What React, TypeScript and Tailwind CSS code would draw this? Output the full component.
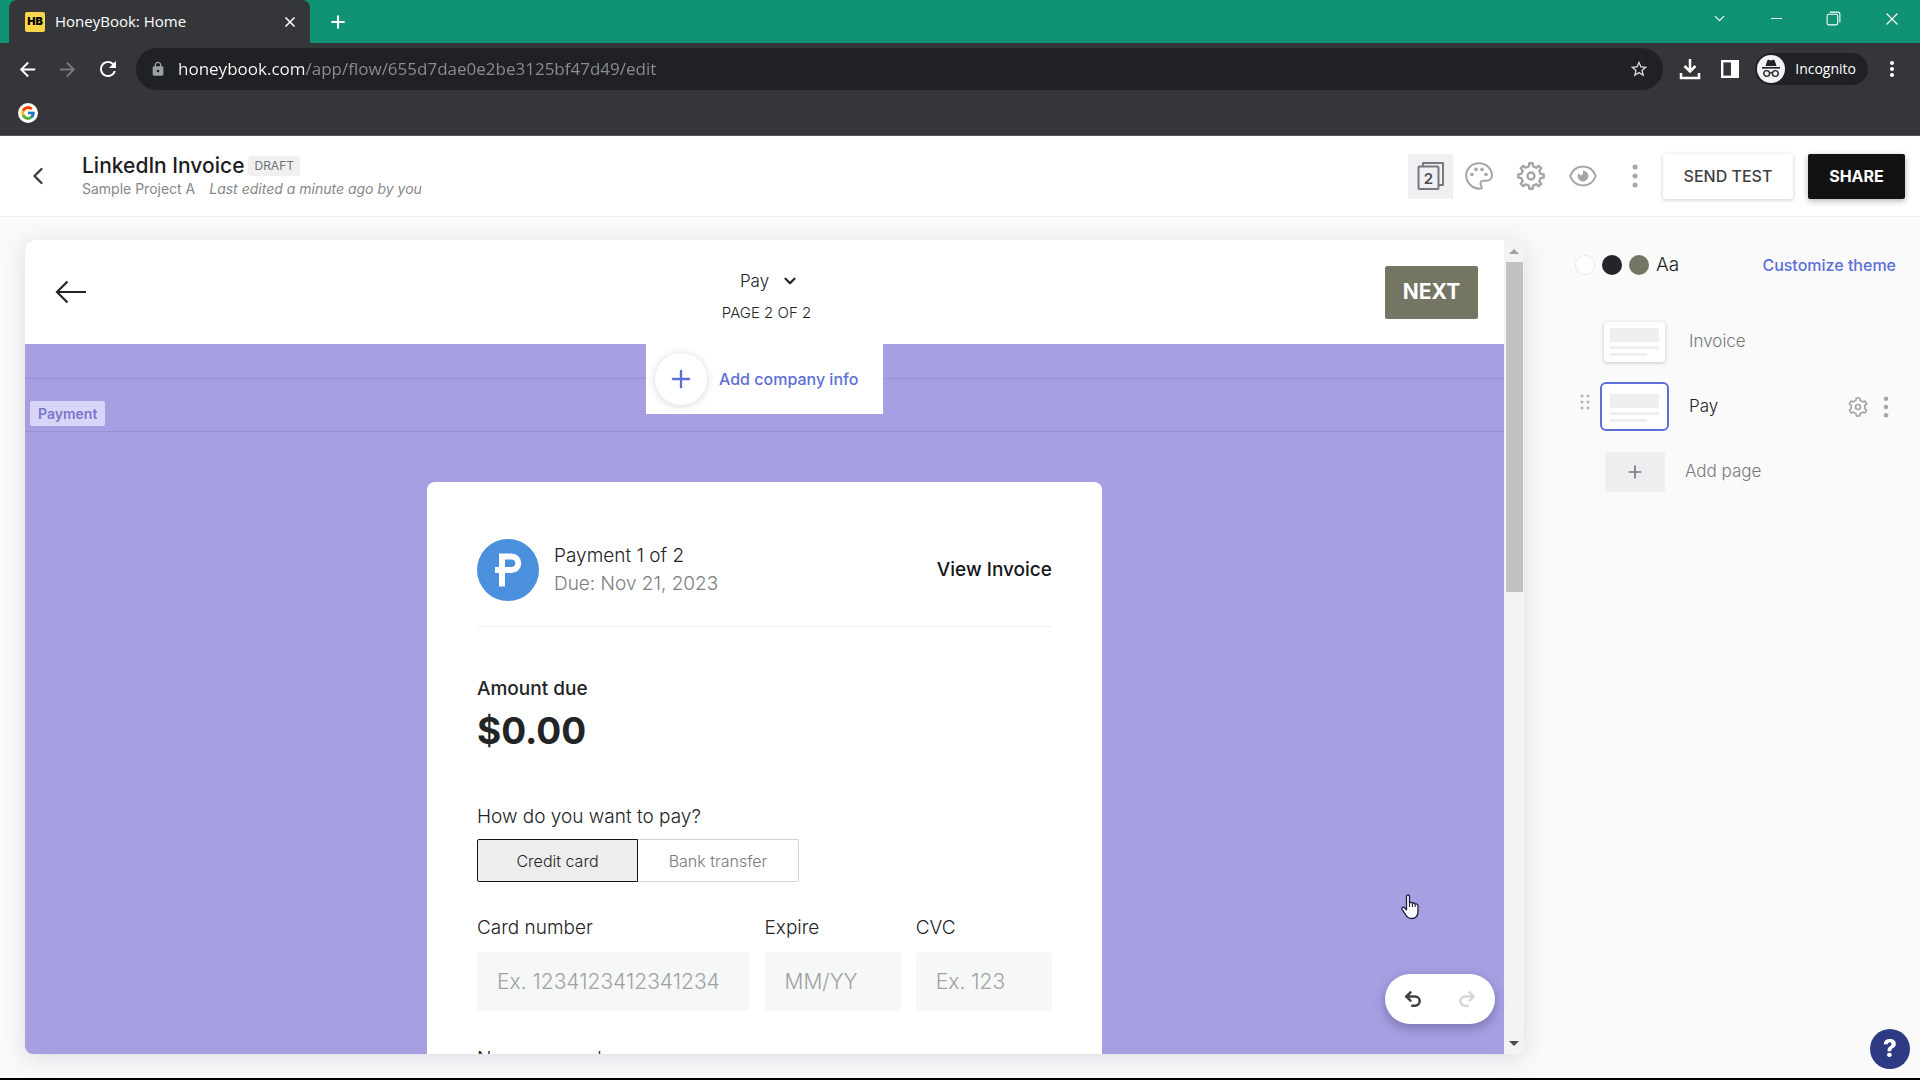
import { useState } from "react";
import { ChevronLeft, ChevronDown, Plus, X, Undo2, Redo2, Minus } from "lucide-react";
import { FcGoogle } from "react-icons/fc";
import {
  MdArrowBack,
  MdArrowForward,
  MdRefresh,
  MdLock,
  MdStarOutline,
  MdMoreVert,
} from "react-icons/md";

// Builds a closed gear outline centred on 12,12
function gearPath(teeth: number, outer: number, inner: number) {
  const step = (Math.PI * 2) / teeth;
  const points: string[] = [];
  for (let i = 0; i < teeth; i++) {
    const a = i * step - Math.PI / 2;
    const corners = [
      [a - step * 0.28, inner],
      [a - step * 0.17, outer],
      [a + step * 0.17, outer],
      [a + step * 0.28, inner],
    ];
    corners.forEach(([angle, r]) => {
      points.push(`${(12 + Math.cos(angle) * r).toFixed(2)} ${(12 + Math.sin(angle) * r).toFixed(2)}`);
    });
  }
  return `M${points.join("L")}Z`;
}

function Gear({ teeth, className }: { teeth: number; className: string }) {
  return (
    <svg viewBox="0 0 24 24" fill="none" stroke="currentColor" strokeWidth="2" strokeLinejoin="round" className={className}>
      <path d={gearPath(teeth, 11, 8.4)} />
      <circle cx="12" cy="12" r="3" />
    </svg>
  );
}

function Dots({ className }: { className: string }) {
  return (
    <svg viewBox="0 0 6 24" fill="currentColor" className={className}>
      <circle cx="3" cy="3" r="2.5" />
      <circle cx="3" cy="12" r="2.5" />
      <circle cx="3" cy="21" r="2.5" />
    </svg>
  );
}

function PagesIcon() {
  return (
    <svg viewBox="0 0 28 30" fill="none" stroke="#77797e" strokeWidth="2" strokeLinejoin="round" className="h-[30px] w-7">
      <path d="M6 5V2h20v22h-4" />
      <rect x="1.5" y="5.5" width="20" height="22.5" rx="1" />
      <text x="11.5" y="22.5" textAnchor="middle" fontSize="15" fontWeight="600" fontFamily="Inter, sans-serif" fill="#4b4d52" stroke="none">
        2
      </text>
    </svg>
  );
}

function PaletteIcon() {
  return (
    <svg viewBox="0 0 28 28" fill="none" stroke="currentColor" strokeWidth="2" strokeLinejoin="round" className="size-7">
      <path d="M14 1.3C7 1.3 1.2 6.3 1.2 13.2c0 7 5.6 13.2 13.4 13.5 2.2.1 2.6-1 1.6-2.700-1.500-2.400-.6-5.300 2-5.300h3.300c3.200 0 5.400-2.200 5.400-5.400C26.900 6.500 21 1.300 14 1.300Z" />
      <g fill="currentColor" stroke="none">
        <circle cx="7" cy="12.500" r="1.800" />
        <circle cx="11" cy="7.400" r="1.800" />
        <circle cx="17" cy="7.400" r="1.800" />
        <circle cx="21" cy="12.500" r="1.800" />
      </g>
    </svg>
  );
}

function EyeIcon() {
  return (
    <svg viewBox="0 0 28 22" fill="none" stroke="currentColor" strokeWidth="2" className="h-[22px] w-7">
      <path d="M1.200 11C3.500 5 8.500 1.500 14 1.500S24.500 5 26.800 11C24.500 17 19.500 20.500 14 20.500S3.500 17 1.200 11Z" />
      <path d="M14 5.600A5.400 5.400 0 1 1 9.200 8.600L12 10.500Q14.500 10 14 5.600Z" fill="currentColor" stroke="none" />
    </svg>
  );
}

function IncognitoIcon() {
  return (
    <svg viewBox="0 0 28 28" className="size-7">
      <circle cx="14" cy="14" r="14" fill="#f1f3f4" />
      <g fill="#202124">
        <path d="M10.300 5.500q.4-1 1.400-.7l2.300.6 2.300-.6q1-.3 1.400.7l1.800 5.500h-11Z" />
        <rect x="5" y="12" width="18" height="1.600" />
      </g>
      <g fill="none" stroke="#202124" strokeWidth="1.400">
        <circle cx="9.700" cy="18.500" r="2.900" />
        <circle cx="18.300" cy="18.500" r="2.900" />
        <path d="M12.600 18q1.400-.8 2.800 0" />
      </g>
    </svg>
  );
}

function HandCursor() {
  return (
    <svg viewBox="0 0 20 26" className="pointer-events-none absolute right-[104px] bottom-[134px] z-20 h-[26px] w-5">
      <path
        d="M6.500 2.500c0-2 3-2 3 0V9c.6-1.200 2.800-.9 2.900.5.8-1 2.700-.6 2.800.8.900-.8 2.800-.3 2.800 1.500v5.200c0 4.700-2.500 7.500-6.400 7.500-3.300 0-4.700-1.500-6.300-4.300L2 15.400c-.8-1.700 1-2.900 2.400-1.600l2.100 2Z"
        fill="#fff"
        stroke="#1f1b3a"
        strokeWidth="1.300"
        strokeLinejoin="round"
      />
      <path d="M9.500 9v4M12.400 9.700V13M15.200 10.500V13" stroke="#1f1b3a" strokeWidth="1.100" />
    </svg>
  );
}

function BrowserChrome() {
  return (
    <div className="bg-[#35363a] font-['Open_Sans',sans-serif] text-white">
      <div className="flex h-[43px] items-stretch bg-[#0f9374] pl-[9px]">
        <div className="flex w-[301px] items-center rounded-t-lg bg-[#35363a] pr-3 pl-4">
          <span className="flex h-5 w-5 items-center justify-center rounded-xs bg-[#fbd64b] font-['Inter',sans-serif] text-[11px] font-black text-black">
            HB
          </span>
          <span className="ml-2.5 flex-1 text-[15px]">HoneyBook: Home</span>
          <button aria-label="Close tab">
            <X className="size-4" strokeWidth={2.5} />
          </button>
        </div>
        <button aria-label="New tab" className="ml-[18px]">
          <Plus className="size-5" strokeWidth={2.5} />
        </button>
        <div className="ml-auto flex items-center gap-10 pr-[18px] pb-1.5">
          <button aria-label="Search tabs">
            <ChevronDown className="size-[17px]" strokeWidth={1.5} />
          </button>
          <button aria-label="Minimize">
            <Minus className="size-[17px]" strokeWidth={1.5} />
          </button>
          <button aria-label="Restore">
            <svg viewBox="0 0 16 16" fill="none" stroke="currentColor" className="size-[17px]">
              <rect x="2" y="4" width="10" height="10" rx="1.500" />
              <path d="M4.500 2H12a2 2 0 0 1 2 2v7.500" />
            </svg>
          </button>
          <button aria-label="Close">
            <X className="size-5" strokeWidth={1.5} />
          </button>
        </div>
      </div>

      <div className="flex h-[52px] items-center pr-4 pl-4">
        <button aria-label="Back">
          <MdArrowBack className="size-[23px]" />
        </button>
        <button aria-label="Forward" className="ml-[17px] text-[#77787c]">
          <MdArrowForward className="size-[23px]" />
        </button>
        <button aria-label="Reload" className="ml-[17px]">
          <MdRefresh className="size-6" />
        </button>
        <div className="ml-4 flex h-[42px] flex-1 items-center rounded-full bg-[#202124] px-3.5">
          <MdLock className="size-4 text-[#9aa0a6]" />
          <input
            aria-label="Address"
            defaultValue="honeybook.com/app/flow/655d7dae0e2be3125bf47d49/edit"
            className="ml-3 flex-1 bg-[linear-gradient(90deg,#ffffff_127px,#8b8f94_127px)] bg-clip-text text-[17px] text-transparent outline-none"
          />
          <button aria-label="Bookmark this page">
            <MdStarOutline className="size-5 text-[#d5d7da]" />
          </button>
        </div>
        <button aria-label="Downloads" className="ml-4">
          <svg viewBox="0 0 22 22" fill="none" stroke="currentColor" strokeWidth="2.500" className="size-[22px]">
            <path d="M11 1v12M5.500 8l5.500 5.500L16.500 8M2 15v5h18v-5" />
          </svg>
        </button>
        <button aria-label="Side panel" className="ml-5">
          <svg viewBox="0 0 18 18" className="size-[18px]">
            <rect x="1.200" y="1.200" width="15.600" height="15.600" fill="none" stroke="currentColor" strokeWidth="2.400" />
            <rect x="10" y="1" width="7" height="16" fill="currentColor" />
          </svg>
        </button>
        <button className="ml-4 flex h-8 items-center gap-2.5 rounded-full bg-[#202124] pr-3 pl-0.5 text-sm">
          <IncognitoIcon />
          Incognito
        </button>
        <button aria-label="Browser menu" className="ml-3">
          <MdMoreVert className="size-6" />
        </button>
      </div>

      <div className="flex h-[41px] items-start border-b border-[#55565a] pt-2 pl-[18px]">
        <a href="#google" aria-label="Google" className="rounded-full bg-white p-0.5">
          <FcGoogle className="size-4" />
        </a>
      </div>
    </div>
  );
}

function EditorHeader() {
  return (
    <header className="flex items-center border-b border-[#eeeeef] bg-white py-[17px] pr-[15px] pl-6">
      <button aria-label="Back to project" className="text-[#3a3a3c]">
        <ChevronLeft className="size-7" strokeWidth={2} />
      </button>
      <div className="ml-[30px]">
        <div className="flex items-center gap-1">
          <h1 className="text-[21px] leading-[26px] font-medium text-[#1c1c1e]">LinkedIn Invoice</h1>
          <span className="rounded bg-[#f0f0f1] px-1.5 text-xs leading-5 text-[#6f7175]">DRAFT</span>
        </div>
        <p className="text-sm leading-5 text-[#85878a]">
          Sample Project A <em className="ml-2.5">Last edited a minute ago by you</em>
        </p>
      </div>
      <div className="ml-auto flex items-center text-[#a3a5a9]">
        <button aria-label="Pages" className="flex h-[45px] w-[45px] items-center justify-center bg-[#eff0f1]">
          <PagesIcon />
        </button>
        <button aria-label="Theme" className="ml-3">
          <PaletteIcon />
        </button>
        <button aria-label="Settings" className="ml-6">
          <Gear teeth={8} className="size-7" />
        </button>
        <button aria-label="Preview" className="ml-6">
          <EyeIcon />
        </button>
        <button aria-label="More" className="mr-5 ml-[30px]">
          <Dots className="h-6 w-4" />
        </button>
        <button className="h-[45px] w-[130px] rounded-xs bg-white text-base font-medium text-[#3f4043] shadow-[0_1px_4px_rgba(0,0,0,0.2)]">
          SEND TEST
        </button>
        <button className="ml-[15px] h-[45px] w-[97px] rounded-xs bg-[#121214] text-base font-bold text-white shadow-[0_2px_6px_rgba(0,0,0,0.3)]">
          SHARE
        </button>
      </div>
    </header>
  );
}

const fields = [
  { id: "card-number", label: "Card number", placeholder: "Ex. 1234123412341234" },
  { id: "expire", label: "Expire", placeholder: "MM/YY" },
  { id: "cvc", label: "CVC", placeholder: "Ex. 123" },
];

function PaymentCard() {
  const [method, setMethod] = useState("Credit card");

  return (
    <section className="mx-auto mt-[50px] w-[675px] rounded-t-lg bg-white px-[50px] pt-[57px] text-[19px] leading-7 font-light text-[#222426]">
      <div className="flex items-center border-b border-[#efefef] pb-[25px]">
        <svg viewBox="0 0 62 62" className="size-[62px]">
          <circle cx="31" cy="31" r="31" fill="#4a90dc" />
          <path
            d="M25 47.500V17.500h9.500a6.800 6.800 0 0 1 0 13.600H18"
            fill="none"
            stroke="#fff"
            strokeWidth="6"
          />
        </svg>
        <div className="ml-[15px]">
          <p>Payment 1 of 2</p>
          <p className="text-[#7c7e80]">Due: Nov 21, 2023</p>
        </div>
        <a href="#invoice" className="ml-auto font-medium text-[#161618]">
          View Invoice
        </a>
      </div>

      <p className="mt-12 font-medium">Amount due</p>
      <p className="mt-0.5 text-[37px] leading-[52px] font-bold">$0.00</p>

      <fieldset className="mt-[46px]">
        <legend>How do you want to pay?</legend>
        <div className="mt-2 flex text-base">
          {["Credit card", "Bank transfer"].map((name) => (
            <label
              key={name}
              className="flex h-[43px] w-[161px] items-center justify-center border border-[#d3d4d5] text-[#77797c] first:rounded-l-xs last:rounded-r-xs last:border-l-0 has-checked:border-[#161618] has-checked:bg-[#ecedec] has-checked:text-[#222426]"
            >
              <input
                type="radio"
                name="method"
                checked={method === name}
                onChange={() => setMethod(name)}
                className="sr-only"
              />
              {name}
            </label>
          ))}
        </div>
      </fieldset>

      <div className="mt-8 grid grid-cols-[2fr_1fr_1fr] gap-x-[15px]">
        {fields.map((field) => (
          <div key={field.id} className="min-w-0">
            <label htmlFor={field.id} className="block">
              {field.label}
            </label>
            <input
              id={field.id}
              placeholder={field.placeholder}
              className="mt-2.5 h-[59px] w-full rounded-xs bg-[#f6f7f7] px-5 text-[21px] placeholder:text-[#9fa1a4]"
            />
          </div>
        ))}
      </div>

      <label htmlFor="card-name" className="mt-[34px] block">
        Name on card
      </label>
      <input id="card-name" className="mt-2.5 h-[59px] w-full bg-[#f6f7f7] px-5 text-[21px]" />
    </section>
  );
}

function Canvas() {
  return (
    <div className="relative flex min-h-0 flex-1 rounded-lg shadow-[0_4px_24px_rgba(40,40,80,0.14)]">
      <div className="flex min-w-0 flex-1 flex-col overflow-hidden rounded-l-lg bg-[#a6a0e2]">
        <div className="grid h-[104px] shrink-0 grid-cols-3 items-center bg-white pr-[26px] pl-[30px] text-[#222426]">
          <button aria-label="Previous page" className="justify-self-start">
            <svg viewBox="0 0 32 24" fill="none" stroke="currentColor" strokeWidth="2.200" className="h-6 w-8">
              <path d="M31 12H2.500M12.500 1.500 2 12l10.500 10.500" />
            </svg>
          </button>
          <div className="flex flex-col items-center pt-2.5 font-light">
            <div className="flex items-center gap-3 pl-1.5">
              <select aria-label="Page" className="field-sizing-content appearance-none bg-transparent text-[17px] leading-8">
                <option>Pay</option>
                <option>Invoice</option>
              </select>
              <ChevronDown className="pointer-events-none size-[18px]" strokeWidth={3} />
            </div>
            <p className="text-[15px] leading-8">PAGE 2 OF 2</p>
          </div>
          <button className="h-[53px] w-[93px] justify-self-end rounded-xs bg-[#747562] text-[21px] font-bold text-white">
            NEXT
          </button>
        </div>

        <div className="relative h-[88px] shrink-0 border-b border-[#9790d8]">
          <div className="absolute inset-x-0 top-[34px] h-px bg-[#9790d8]" />
          <button className="relative mx-auto flex h-[70px] w-[237px] items-center bg-white pl-[9px] text-base font-medium text-[#5c6fd6]">
            <span className="flex size-[52px] items-center justify-center rounded-full bg-white shadow-[0_1px_8px_rgba(0,0,0,0.16)]">
              <Plus className="size-7" strokeWidth={2} />
            </span>
            <span className="ml-3">Add company info</span>
          </button>
          <span className="absolute bottom-[5px] left-[5px] rounded-xs bg-[#d8d6f8] px-2 text-sm leading-[25px] font-semibold text-[#7a76cb]">
            Payment
          </span>
        </div>

        <PaymentCard />
      </div>

      <div className="flex w-5 flex-col items-center justify-between rounded-r-lg bg-[#f3f3f4] pb-2">
        <div className="flex w-full flex-col items-center">
          <div className="flex h-[22px] items-center">
            <div className="border-x-5 border-b-5 border-x-transparent border-b-[#a0a0a0]" />
          </div>
          <div className="h-[330px] w-[17px] bg-[#c1c1c1]" />
        </div>
        <div className="border-x-5 border-t-5 border-x-transparent border-t-[#4c4c4c]" />
      </div>

      <div className="absolute right-[29px] bottom-[30px] z-10 flex h-[50px] w-[110px] items-center justify-between rounded-full bg-white px-[18px] shadow-[0_4px_12px_rgba(40,30,90,0.35)]">
        <button aria-label="Undo" className="text-[#3f4043]">
          <Undo2 className="size-5" strokeWidth={3} />
        </button>
        <button aria-label="Redo" className="text-[#d6d7d9]">
          <Redo2 className="size-5" strokeWidth={3} />
        </button>
      </div>
      <HandCursor />
    </div>
  );
}

function PageThumb({ active }: { active?: boolean }) {
  return (
    <span
      className={`flex flex-col gap-1 bg-white ${
        active
          ? "h-[49px] w-[69px] rounded-md border-2 border-[#5c6fd6] px-2 pt-2.5"
          : "mx-1 h-10 w-[61px] rounded px-1.5 pt-1.5 shadow-[0_1px_4px_rgba(0,0,0,0.2)]"
      }`}
    >
      <span className="h-3.5 bg-[#efeff0]" />
      <span className="h-[3px] bg-[#efeff0]" />
      <span className="h-[3px] w-3/4 bg-[#efeff0]" />
    </span>
  );
}

function Sidebar() {
  return (
    <aside className="w-[346px] shrink-0 text-[17px] font-light text-[#77797c]">
      <div className="flex h-[50px] items-center gap-[7px] pl-[25px]">
        <span className="size-5 rounded-full border border-[#e6e7e8] bg-white" />
        <span className="size-5 rounded-full bg-[#242528]" />
        <span className="size-5 rounded-full bg-[#747562]" />
        <span className="text-[19px] text-[#222426]">Aa</span>
        <a href="#theme" className="ml-auto text-base font-medium text-[#5c6fd6]">
          Customize theme
        </a>
      </div>
      <ul className="mt-[19px] pl-[50px]">
        <li className="flex h-[65px] items-center">
          <PageThumb />
          <button className="ml-5">Invoice</button>
        </li>
        <li className="relative flex h-[65px] items-center">
          <svg viewBox="0 0 10 16" fill="#b1b3b6" className="absolute bottom-[29px] left-[-20px] h-4 w-2.5">
            <circle cx="2" cy="2" r="1.500" />
            <circle cx="8" cy="2" r="1.500" />
            <circle cx="2" cy="8" r="1.500" />
            <circle cx="8" cy="8" r="1.500" />
            <circle cx="2" cy="14" r="1.500" />
            <circle cx="8" cy="14" r="1.500" />
          </svg>
          <PageThumb active />
          <button className="ml-5 text-[#222426]">Pay</button>
          <button aria-label="Page settings" className="ml-auto text-[#a3a5a9]">
            <Gear teeth={6} className="size-5" />
          </button>
          <button aria-label="Page options" className="mr-1 ml-3 text-[#a3a5a9]">
            <Dots className="h-[22px] w-3" />
          </button>
        </li>
        <li className="flex h-[65px] items-center">
          <button className="ml-[5px] flex items-center gap-5">
            <span className="flex h-10 w-[60px] items-center justify-center rounded-xs bg-[#eeeef0]">
              <Plus className="size-5" strokeWidth={2} />
            </span>
            Add page
          </button>
        </li>
      </ul>
    </aside>
  );
}

export default function App() {
  return (
    <div className="flex h-screen flex-col overflow-hidden border-b-2 border-black bg-[#fafafb] font-['Inter',sans-serif]">
      <BrowserChrome />
      <EditorHeader />
      <main className="flex min-h-0 flex-1 gap-[26px] pt-[23px] pr-6 pb-6 pl-[25px]">
        <Canvas />
        <Sidebar />
      </main>
      <button className="fixed right-[10px] bottom-[11px] size-10 rounded-full bg-[#2f3a85] text-2xl font-extrabold text-white" aria-label="Help">
        ?
      </button>
    </div>
  );
}
